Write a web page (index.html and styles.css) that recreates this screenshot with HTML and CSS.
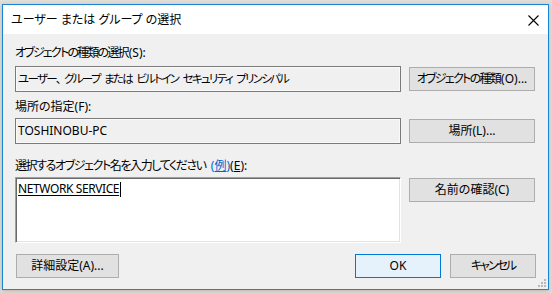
FILE: index.html
```html
<!DOCTYPE html>
<html lang="ja">
<head>
<meta charset="utf-8">
<title>ユーザー または グループ の選択</title>
<link rel="stylesheet" href="styles.css">
</head>
<body>
<div class="window">
  <div class="titlebar">
    <span class="title">ユーザー または グループ の選択</span>
    <svg class="close" width="11" height="11" viewBox="0 0 11 11"><path d="M0.5 0.5 L10.5 10.5 M10.5 0.5 L0.5 10.5" stroke="#000" stroke-width="1.1" fill="none"/></svg>
  </div>
  <div class="content">
    <div class="label"><span class="j1">オブジェクトの種類の選択</span>(S):</div>
    <div class="row">
      <div class="field kana">ユーザー、 グループ または ビルトイン セキュリティ プリンシパル</div>
      <div class="btn"><span class="jb">オブジェクトの種類</span>(O)...</div>
    </div>
    <div class="label l2">場所の指定(F):</div>
    <div class="row">
      <div class="field">TOSHINOBU-PC</div>
      <div class="btn">場所(L)...</div>
    </div>
    <div class="label l3"><span class="j3">選択するオブジェクト名を入力してください</span> <span class="link">(<u>例</u>)</span>(<u>E</u>):</div>
    <div class="row top">
      <div class="area"><span class="name">NETWORK SERVICE</span><span class="caret"></span></div>
      <div class="btn">名前の確認(C)</div>
    </div>
    <div class="footer">
      <div class="btn adv">詳細設定(A)...</div>
      <div class="spacer"></div>
      <div class="btn ok">OK</div>
      <div class="btn cancel">キャンセル</div>
    </div>
  </div>
  <div class="grip">
    <i class="d1"></i><i class="d2"></i><i class="d3"></i><i class="d4"></i><i class="d5"></i><i class="d6"></i>
  </div>
</div>
</body>
</html>
```
FILE: styles.css
```css
html, body {
  margin: 0;
  padding: 0;
}
body {
  width: 552px;
  height: 293px;
  background: #e2ddd6;
  font-family: "Noto Sans", "Noto Sans CJK JP", sans-serif;
  font-size: 12px;
  font-feature-settings: "palt";
  color: #000;
  overflow: hidden;
}
.window {
  position: relative;
  box-sizing: border-box;
  width: 547px;
  height: 286px;
  margin: 4px 0 0 2px;
  border: 1px solid #1883d7;
  background: #f0f0f0;
  box-shadow: 0 1px 4px rgba(80, 60, 40, 0.25);
  display: flex;
  flex-direction: column;
}
.titlebar {
  height: 29px;
  background: #fff;
  display: flex;
  align-items: center;
  padding: 0 9px 0 8px;
}
.title {
  flex: 1;
  line-height: 16px;
  padding-top: 1px;
}
.close {
  display: block;
  margin-top: 1px;
}
.content {
  padding: 11px 12px 0 12px;
  display: flex;
  flex-direction: column;
}
.label {
  height: 16px;
  line-height: 16px;
  margin-bottom: 5px;
  white-space: pre;
}
.j1 { letter-spacing: -1.8px; margin-right: 1px; }
.j3 { letter-spacing: -1.4px; margin-right: 2px; }
.jb { letter-spacing: -1.7px; margin-right: 1px; }
.l2 { margin-top: 7px; margin-bottom: 3px; }
.l3 { margin-top: 14px; margin-bottom: 3px; }
.link { color: #0066cc; }
.row {
  display: flex;
  align-items: center;
  gap: 8px;
}
.row.top { align-items: flex-start; }
.row.top .btn { margin-top: 1px; }
.field {
  box-sizing: border-box;
  width: 386px;
  height: 26px;
  border: 1px solid #7a7a7a;
  box-shadow: inset 0 0 0 1px #fafafa;
  background: #f0f0f0;
  padding: 0 2px;
  line-height: 24px;
  white-space: pre;
  overflow: hidden;
}
.field.kana {
  font-size: 11.5px;
  letter-spacing: -1.7px;
  word-spacing: 3px;
}
.area {
  box-sizing: border-box;
  width: 386px;
  height: 66px;
  background: #fff;
  border-top: 1px solid #a0a0a0;
  border-left: 1px solid #a0a0a0;
  border-right: 1px solid #ffffff;
  border-bottom: 1px solid #ffffff;
  box-shadow: inset 1px 1px 0 #696969, inset -1px -1px 0 #e3e3e3;
  padding: 3px 0 0 2px;
  line-height: 16px;
  display: flex;
  align-items: flex-start;
}
.name {
  text-decoration: underline;
  text-underline-offset: 2px;
  letter-spacing: -0.4px;
  white-space: pre;
}
.caret {
  display: inline-block;
  width: 1px;
  height: 15px;
  background: #000;
  margin-left: 1px;
  margin-top: 1px;
}
.btn {
  box-sizing: border-box;
  width: 126px;
  height: 24px;
  border: 1px solid #adadad;
  background: #e1e1e1;
  display: flex;
  align-items: center;
  justify-content: center;
  white-space: pre;
  line-height: 16px;
}
.footer {
  display: flex;
  margin-top: 11px;
  padding-left: 1px;
}
.spacer { flex: 1; }
.btn.adv { width: 103px; }
.btn.ok {
  width: 86px;
  border-color: #0078d7;
  background: #e5f1fb;
  margin-right: 9px;
}
.btn.cancel { width: 86px; letter-spacing: -2px; }
.grip {
  position: absolute;
  right: 2px;
  bottom: 2px;
  width: 8px;
  height: 8px;
}
.grip i {
  position: absolute;
  width: 2px;
  height: 2px;
  background: #b8b8b8;
}
.grip .d1 { right: 0; top: 0; }
.grip .d2 { right: 0; top: 3px; }
.grip .d3 { right: 3px; top: 3px; }
.grip .d4 { right: 0; top: 6px; }
.grip .d5 { right: 3px; top: 6px; }
.grip .d6 { right: 6px; top: 6px; }
```
